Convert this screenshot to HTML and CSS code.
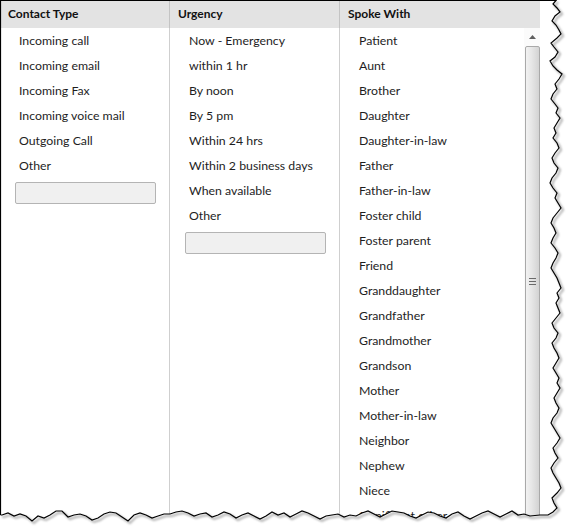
FILE: index.html
```html
<!DOCTYPE html>
<html>
<head>
<meta charset="utf-8">
<link rel="stylesheet" href="styles.css">
</head>
<body>
<div class="frame">
  <div class="panel">
    <div class="header">
      <div class="hcell">Contact Type</div>
      <div class="hcell">Urgency</div>
      <div class="hcell last">Spoke With</div>
    </div>
    <div class="body">
      <div class="col">
        <div class="item">Incoming call</div>
        <div class="item">Incoming email</div>
        <div class="item">Incoming Fax</div>
        <div class="item">Incoming voice mail</div>
        <div class="item">Outgoing Call</div>
        <div class="item">Other</div>
        <div class="field"></div>
      </div>
      <div class="col">
        <div class="item">Now - Emergency</div>
        <div class="item">within 1 hr</div>
        <div class="item">By noon</div>
        <div class="item">By 5 pm</div>
        <div class="item">Within 24 hrs</div>
        <div class="item">Within 2 business days</div>
        <div class="item">When available</div>
        <div class="item">Other</div>
        <div class="field"></div>
      </div>
      <div class="col last">
        <div class="item">Patient</div>
        <div class="item">Aunt</div>
        <div class="item">Brother</div>
        <div class="item">Daughter</div>
        <div class="item">Daughter-in-law</div>
        <div class="item">Father</div>
        <div class="item">Father-in-law</div>
        <div class="item">Foster child</div>
        <div class="item">Foster parent</div>
        <div class="item">Friend</div>
        <div class="item">Granddaughter</div>
        <div class="item">Grandfather</div>
        <div class="item">Grandmother</div>
        <div class="item">Grandson</div>
        <div class="item">Mother</div>
        <div class="item">Mother-in-law</div>
        <div class="item">Neighbor</div>
        <div class="item">Nephew</div>
        <div class="item">Niece</div>
        <div class="item">Significant other</div>
      </div>
      <div class="scrollbar">
        <div class="arrow"><svg width="7" height="4" viewBox="0 0 7 4"><path d="M0 4 L3.5 0 L7 4 Z" fill="#606060"/></svg></div>
        <div class="thumb"><div class="grip"></div></div>
      </div>
    </div>
  </div>
  <svg class="edge" width="573" height="532" viewBox="0 0 573 532">
    <defs>
      <filter id="blur" x="-10%" y="-10%" width="120%" height="120%"><feGaussianBlur stdDeviation="1"/></filter>
    </defs>
    <path class="shadow" transform="translate(2,2)" d="M556 0 L553 4 L557 8 L560 12 L555 16 L552 21 L556 25 L559 30 L561 34 L557 38 L551 43 L554 47 L558 52 L555 57 L550 61 L553 66 L557 70 L562 74 L559 79 L555 84 L557 89 L553 94 L551 99 L555 104 L558 108 L556 113 L560 118 L557 123 L554 128 L556 133 L553 138 L557 143 L559 148 L555 153 L552 158 L554 163 L558 168 L556 173 L552 178 L550 183 L553 188 L557 193 L555 198 L558 203 L561 208 L557 213 L553 218 L551 223 L554 228 L556 233 L553 238 L551 243 L555 248 L558 253 L556 258 L553 263 L551 268 L554 273 L557 278 L559 283 L561 288 L557 293 L559 298 L556 303 L558 308 L560 313 L556 318 L552 323 L554 328 L558 333 L556 338 L552 343 L554 348 L557 353 L559 358 L556 363 L553 368 L556 373 L559 378 L557 383 L560 388 L557 393 L554 398 L556 403 L559 408 L557 413 L553 418 L551 423 L554 428 L557 433 L560 438 L557 443 L553 448 L555 453 L558 458 L554 463 L551 468 L553 473 L556 478 L559 483 L561 488 L557 493 L552 498 L554 503 L557 508 L553 512 L548 515 L540 515 L530 516 L524 514 L518 515 L512 511 L506 514 L500 517 L494 514 L488 511 L482 513 L476 516 L470 519 L464 516 L458 512 L452 514 L446 518 L440 516 L434 513 L428 512 L422 515 L416 518 L410 516 L404 513 L398 512 L392 511 L386 514 L380 517 L374 514 L368 511 L362 513 L356 516 L350 515 L344 517 L338 514 L332 515 L326 516 L320 519 L314 516 L308 513 L302 511 L296 514 L290 517 L284 513 L278 515 L272 512 L266 516 L260 519 L254 516 L248 513 L242 515 L236 518 L230 514 L224 512 L218 515 L212 517 L206 513 L200 514 L194 516 L188 513 L182 511 L176 512 L170 514 L164 514 L158 516 L152 518 L146 515 L140 513 L134 515 L128 521 L122 517 L116 513 L110 512 L104 514 L98 518 L92 520 L86 516 L80 514 L74 515 L68 517 L62 511 L56 511 L50 515 L44 518 L38 516 L32 521 L26 516 L20 514 L14 516 L8 513 L2 515 L0 515"/>
    <path class="outline" d="M0.5 515 L0.5 0.5 L556 0.5 L553 4 L557 8 L560 12 L555 16 L552 21 L556 25 L559 30 L561 34 L557 38 L551 43 L554 47 L558 52 L555 57 L550 61 L553 66 L557 70 L562 74 L559 79 L555 84 L557 89 L553 94 L551 99 L555 104 L558 108 L556 113 L560 118 L557 123 L554 128 L556 133 L553 138 L557 143 L559 148 L555 153 L552 158 L554 163 L558 168 L556 173 L552 178 L550 183 L553 188 L557 193 L555 198 L558 203 L561 208 L557 213 L553 218 L551 223 L554 228 L556 233 L553 238 L551 243 L555 248 L558 253 L556 258 L553 263 L551 268 L554 273 L557 278 L559 283 L561 288 L557 293 L559 298 L556 303 L558 308 L560 313 L556 318 L552 323 L554 328 L558 333 L556 338 L552 343 L554 348 L557 353 L559 358 L556 363 L553 368 L556 373 L559 378 L557 383 L560 388 L557 393 L554 398 L556 403 L559 408 L557 413 L553 418 L551 423 L554 428 L557 433 L560 438 L557 443 L553 448 L555 453 L558 458 L554 463 L551 468 L553 473 L556 478 L559 483 L561 488 L557 493 L552 498 L554 503 L557 508 L553 512 L548 515 L540 515 L530 516 L524 514 L518 515 L512 511 L506 514 L500 517 L494 514 L488 511 L482 513 L476 516 L470 519 L464 516 L458 512 L452 514 L446 518 L440 516 L434 513 L428 512 L422 515 L416 518 L410 516 L404 513 L398 512 L392 511 L386 514 L380 517 L374 514 L368 511 L362 513 L356 516 L350 515 L344 517 L338 514 L332 515 L326 516 L320 519 L314 516 L308 513 L302 511 L296 514 L290 517 L284 513 L278 515 L272 512 L266 516 L260 519 L254 516 L248 513 L242 515 L236 518 L230 514 L224 512 L218 515 L212 517 L206 513 L200 514 L194 516 L188 513 L182 511 L176 512 L170 514 L164 514 L158 516 L152 518 L146 515 L140 513 L134 515 L128 521 L122 517 L116 513 L110 512 L104 514 L98 518 L92 520 L86 516 L80 514 L74 515 L68 517 L62 511 L56 511 L50 515 L44 518 L38 516 L32 521 L26 516 L20 514 L14 516 L8 513 L2 515 L0.5 515"/>
  </svg>
</div>
</body>
</html>
```
FILE: styles.css
```css
html, body {
  margin: 0;
  padding: 0;
  background: #ffffff;
}
body {
  font-family: "Lato", "Open Sans", sans-serif;
  color: #1e1e1e;
  width: 573px;
  height: 532px;
  overflow: hidden;
}
.frame {
  position: relative;
  width: 573px;
  height: 532px;
}
.panel {
  width: 563px;
  height: 522px;
  background: #ffffff;
  display: flex;
  flex-direction: column;
  clip-path: polygon(0 0, 556px 0, 553px 4px, 557px 8px, 560px 12px, 555px 16px, 552px 21px, 556px 25px, 559px 30px, 561px 34px, 557px 38px, 551px 43px, 554px 47px, 558px 52px, 555px 57px, 550px 61px, 553px 66px, 557px 70px, 562px 74px, 559px 79px, 555px 84px, 557px 89px, 553px 94px, 551px 99px, 555px 104px, 558px 108px, 556px 113px, 560px 118px, 557px 123px, 554px 128px, 556px 133px, 553px 138px, 557px 143px, 559px 148px, 555px 153px, 552px 158px, 554px 163px, 558px 168px, 556px 173px, 552px 178px, 550px 183px, 553px 188px, 557px 193px, 555px 198px, 558px 203px, 561px 208px, 557px 213px, 553px 218px, 551px 223px, 554px 228px, 556px 233px, 553px 238px, 551px 243px, 555px 248px, 558px 253px, 556px 258px, 553px 263px, 551px 268px, 554px 273px, 557px 278px, 559px 283px, 561px 288px, 557px 293px, 559px 298px, 556px 303px, 558px 308px, 560px 313px, 556px 318px, 552px 323px, 554px 328px, 558px 333px, 556px 338px, 552px 343px, 554px 348px, 557px 353px, 559px 358px, 556px 363px, 553px 368px, 556px 373px, 559px 378px, 557px 383px, 560px 388px, 557px 393px, 554px 398px, 556px 403px, 559px 408px, 557px 413px, 553px 418px, 551px 423px, 554px 428px, 557px 433px, 560px 438px, 557px 443px, 553px 448px, 555px 453px, 558px 458px, 554px 463px, 551px 468px, 553px 473px, 556px 478px, 559px 483px, 561px 488px, 557px 493px, 552px 498px, 554px 503px, 557px 508px, 553px 512px, 548px 515px, 540px 515px, 530px 516px, 524px 514px, 518px 515px, 512px 511px, 506px 514px, 500px 517px, 494px 514px, 488px 511px, 482px 513px, 476px 516px, 470px 519px, 464px 516px, 458px 512px, 452px 514px, 446px 518px, 440px 516px, 434px 513px, 428px 512px, 422px 515px, 416px 518px, 410px 516px, 404px 513px, 398px 512px, 392px 511px, 386px 514px, 380px 517px, 374px 514px, 368px 511px, 362px 513px, 356px 516px, 350px 515px, 344px 517px, 338px 514px, 332px 515px, 326px 516px, 320px 519px, 314px 516px, 308px 513px, 302px 511px, 296px 514px, 290px 517px, 284px 513px, 278px 515px, 272px 512px, 266px 516px, 260px 519px, 254px 516px, 248px 513px, 242px 515px, 236px 518px, 230px 514px, 224px 512px, 218px 515px, 212px 517px, 206px 513px, 200px 514px, 194px 516px, 188px 513px, 182px 511px, 176px 512px, 170px 514px, 164px 514px, 158px 516px, 152px 518px, 146px 515px, 140px 513px, 134px 515px, 128px 521px, 122px 517px, 116px 513px, 110px 512px, 104px 514px, 98px 518px, 92px 520px, 86px 516px, 80px 514px, 74px 515px, 68px 517px, 62px 511px, 56px 511px, 50px 515px, 44px 518px, 38px 516px, 32px 521px, 26px 516px, 20px 514px, 14px 516px, 8px 513px, 2px 515px, 0 515px);
}
.header {
  display: grid;
  grid-template-columns: 170px 170px 200px;
  width: 540px;
  height: 28px;
  background: #e3e3e3;
  flex: none;
}
.hcell {
  font-weight: 700;
  font-size: 12px;
  color: #111111;
  padding-left: 8px;
  line-height: 28px;
  border-right: 1px solid #c4c4c4;
  white-space: nowrap;
}
.hcell.last {
  border-right: none;
}
.body {
  display: grid;
  grid-template-columns: 170px 170px 184px 16px;
  flex: 1;
  min-height: 0;
}
.col {
  border-right: 1px solid #cfcfcf;
  padding-top: 0;
  overflow: hidden;
}
.col.last {
  border-right: none;
}
.item {
  height: 25px;
  line-height: 25px;
  font-size: 12.3px;
  padding-left: 19px;
  white-space: nowrap;
  color: #1e1e1e;
}
.field {
  margin: 4px 13px 0 15px;
  height: 20px;
  background: #f0f0f0;
  border: 1px solid #b4b4b4;
  border-radius: 2px;
}
.scrollbar {
  background: #fbfbfb;
  display: flex;
  flex-direction: column;
  align-items: center;
}
.arrow {
  height: 18px;
  display: flex;
  align-items: center;
  justify-content: center;
  padding-top: 0;
}
.thumb {
  width: 13px;
  flex: 1;
  border: 1px solid #a9a9a9;
  border-radius: 2px;
  background: linear-gradient(to right, #f2f2f2 0%, #e6e6e6 45%, #d3d3d3 100%);
  display: flex;
  align-items: flex-start;
  justify-content: center;
  padding-top: 231px;
}
.grip {
  width: 7px;
  height: 5px;
  border-top: 1px solid #6a6a6a;
  border-bottom: 1px solid #6a6a6a;
  background: linear-gradient(#ffffff00 0 2px, #6a6a6a 2px 3px, #ffffff00 3px);
}
.edge {
  position: absolute;
  left: 0;
  top: 0;
  pointer-events: none;
}
.edge .shadow {
  fill: none;
  stroke: #7a7a7a;
  stroke-width: 2;
  opacity: 0.6;
  filter: url(#blur);
}
.edge .outline {
  fill: none;
  stroke: #000000;
  stroke-width: 1.2;
}
```
